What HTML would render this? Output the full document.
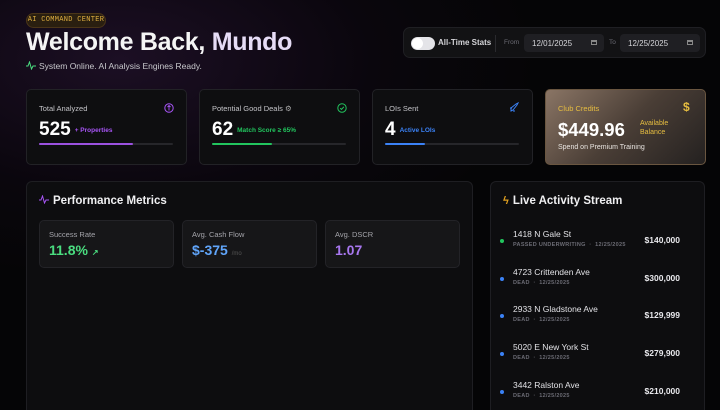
<!DOCTYPE html>
<html style="width:720px;height:410px;overflow:hidden;background:#050506"><head><meta charset="utf-8"><style>
*{box-sizing:border-box;margin:0;padding:0}
body{width:720px;height:410px;overflow:hidden;font-family:"Liberation Sans",sans-serif;color:#e5e5e5;
background:radial-gradient(ellipse 420px 220px at 120px 60px,#1c0f24 0%,#0a060d 60%,#050506 100%);position:relative}
.abs{position:absolute}
.badge{left:26px;top:13px;width:80px;height:15px;border-radius:8px;background:#2a1f10;border:1px solid #4a3518;color:#e0b040;font-family:"Liberation Mono",monospace;font-size:7px;line-height:13px;text-align:center;letter-spacing:.3px}
h1{position:absolute;left:26px;top:28px;font-size:25px;font-weight:bold;letter-spacing:-.3px;color:#f5f5f5}
h1 span{color:#e6dcf6}
.sub{left:26px;top:61px;font-size:8.5px;color:#c8c8cc}
.ctrl{left:403px;top:27px;width:303px;height:31px;border-radius:7px;background:#121214;border:1px solid #1f1f23}
.card{top:89px;width:161px;height:76px;border-radius:5px;background:#0e0e10;border:1px solid #222226}
.card .t{position:absolute;left:12px;top:14px;font-size:7.5px;color:#c4c4c8}
.card .v{position:absolute;left:12px;top:29px;font-size:19px;font-weight:bold;color:#fff}
.card .s{font-size:6.5px;font-weight:bold;margin-left:4px;vertical-align:3px}
.bar{position:absolute;left:12px;top:53px;width:134px;height:2px;background:#26262a;border-radius:1px}
.bar i{display:block;height:2px;border-radius:1px}
.panel{top:181px;height:229px;border-radius:6px 6px 0 0;background:#0d0d0f;border:1px solid #1e1e22;border-bottom:none}
.m{top:220px;width:135px;height:48px;border-radius:5px;background:#161618;border:1px solid #232327}
.m .t{position:absolute;left:9px;top:9px;font-size:7.5px;color:#a4a4aa}
.m .v{position:absolute;left:9px;top:21px;font-size:14px;font-weight:bold}
.row{left:500px;width:180px;height:30px}
.row .d{position:absolute;left:0;top:10px;width:4px;height:4px;border-radius:2px;background:#3b82f6}
.row .n{position:absolute;left:13px;top:0;font-size:8.5px;color:#e2e2e6}
.row .k{position:absolute;left:13px;top:13px;font-size:5.5px;color:#6b6b74;letter-spacing:.3px;font-weight:bold}
.row .p{position:absolute;right:0;top:6px;font-size:8.5px;font-weight:bold;color:#e8e8ec}
</style></head><body>
<div class="abs badge">AI COMMAND CENTER</div>
<h1>Welcome Back, <span>Mundo</span></h1>
<div class="abs sub"><svg width="10" height="9" viewBox="0 0 10 9" style="vertical-align:-1px;margin-right:3px"><path d="M0 5h2l1.5-4 2 7 1.5-3H10" fill="none" stroke="#4ade80" stroke-width="1"/></svg>System Online. AI Analysis Engines Ready.</div>

<div class="abs ctrl">
 <div class="abs" style="left:7px;top:9px;width:24px;height:13px;border-radius:7px;background:#e4e4e8"></div>
 <div class="abs" style="left:8px;top:10px;width:11px;height:11px;border-radius:6px;background:#fff"></div>
 <div class="abs" style="left:34px;top:10px;font-size:8px;font-weight:bold;color:#d4d4d8">All-Time Stats</div>
 <div class="abs" style="left:91px;top:7px;width:1px;height:17px;background:#2a2a2e"></div>
 <div class="abs" style="left:100px;top:11px;font-size:6.5px;color:#6b6b74">From</div>
 <div class="abs" style="left:120px;top:6px;width:80px;height:18px;border-radius:4px;background:#1f1f23;font-size:8px;color:#d4d4d8;padding:5px 0 0 8px">12/01/2025<span style="position:absolute;right:7px;top:6px;width:6px;height:5px;border:1px solid #888;border-top-width:2px"></span></div>
 <div class="abs" style="left:205px;top:11px;font-size:6.5px;color:#6b6b74">To</div>
 <div class="abs" style="left:216px;top:6px;width:80px;height:18px;border-radius:4px;background:#1f1f23;font-size:8px;color:#d4d4d8;padding:5px 0 0 8px">12/25/2025<span style="position:absolute;right:7px;top:6px;width:6px;height:5px;border:1px solid #888;border-top-width:2px"></span></div>
</div>

<div class="abs card" style="left:26px"><div class="t">Total Analyzed</div>
 <svg class="abs" style="left:137px;top:13px" width="10" height="10" viewBox="0 0 10 10"><circle cx="5" cy="5" r="4.2" fill="none" stroke="#a855f7" stroke-width="1"/><path d="M5 2.5v5M3.5 4L5 2.5 6.5 4" fill="none" stroke="#a855f7" stroke-width=".9"/></svg>
 <div class="v">525<span class="s" style="color:#a855f7">+ Properties</span></div><div class="bar"><i style="width:70%;background:#9b51e0"></i></div></div>
<div class="abs card" style="left:199px"><div class="t">Potential Good Deals <span style="color:#aaa">⚙</span></div>
 <svg class="abs" style="left:137px;top:13px" width="10" height="10" viewBox="0 0 10 10"><circle cx="5" cy="5" r="4.2" fill="none" stroke="#22c55e" stroke-width="1"/><path d="M3.2 5.2l1.3 1.2 2.4-2.6" fill="none" stroke="#22c55e" stroke-width="1"/></svg>
 <div class="v">62<span class="s" style="color:#22c55e">Match Score ≥ 65%</span></div><div class="bar"><i style="width:45%;background:#22c55e"></i></div></div>
<div class="abs card" style="left:372px"><div class="t">LOIs Sent</div>
 <svg class="abs" style="left:136px;top:12px" width="11" height="11" viewBox="0 0 11 11"><path d="M2 9l2-1 4-5 1-2-2 1-5 4zM3 6L1 6M5 8v2" fill="none" stroke="#3b82f6" stroke-width="1"/></svg>
 <div class="v">4<span class="s" style="color:#3b82f6">Active LOIs</span></div><div class="bar"><i style="width:30%;background:#3b82f6"></i></div></div>
<div class="abs card" style="left:545px;background:linear-gradient(135deg,#8a7565 0%,#4a3e36 50%,#242120 100%);border-color:#6a5640">
 <div class="t" style="color:#e6bd40">Club Credits</div>
 <div class="abs" style="left:137px;top:10px;font-size:12px;color:#e6bd40;font-weight:bold">$</div>
 <div class="v" style="font-size:18.5px">$449.96</div>
 <div class="abs" style="left:94px;top:29px;font-size:7px;color:#e6bd40;line-height:9px">Available<br>Balance</div>
 <div class="abs" style="left:12px;top:54px;font-size:7px;color:#e8e4e0">Spend on Premium Training</div></div>

<div class="abs panel" style="left:26px;width:447px"></div>
<div class="abs" style="left:39px;top:195px;font-size:11.5px;font-weight:bold;color:#f0f0f2"><svg width="10" height="9" viewBox="0 0 10 9" style="margin-right:4px"><path d="M0 5h2l1.5-4 2 7 1.5-3H10" fill="none" stroke="#a855f7" stroke-width="1"/></svg>Performance Metrics</div>
<div class="abs m" style="left:39px"><div class="t">Success Rate</div><div class="v" style="color:#4ade80">11.8% <span style="font-size:8px">↗</span></div></div>
<div class="abs m" style="left:182px"><div class="t">Avg. Cash Flow</div><div class="v" style="color:#60a5fa">$-375 <span style="font-size:6px;color:#555;font-weight:normal">/mo</span></div></div>
<div class="abs m" style="left:325px"><div class="t">Avg. DSCR</div><div class="v" style="color:#a877f0">1.07</div></div>

<div class="abs panel" style="left:490px;width:215px"></div>
<div class="abs" style="left:503px;top:195px;font-size:11.5px;font-weight:bold;color:#f0f0f2"><span style="color:#e0a020;font-size:11px;margin-right:4px">ϟ</span>Live Activity Stream</div>
<div class="abs row" style="top:229px"><i class="d" style="background:#22c55e"></i><div class="n">1418 N Gale St</div><div class="k">PASSED UNDERWRITING &nbsp;·&nbsp; 12/25/2025</div><div class="p">$140,000</div></div>
<div class="abs row" style="top:267px"><i class="d"></i><div class="n">4723 Crittenden Ave</div><div class="k">DEAD &nbsp;·&nbsp; 12/25/2025</div><div class="p">$300,000</div></div>
<div class="abs row" style="top:304px"><i class="d"></i><div class="n">2933 N Gladstone Ave</div><div class="k">DEAD &nbsp;·&nbsp; 12/25/2025</div><div class="p">$129,999</div></div>
<div class="abs row" style="top:342px"><i class="d"></i><div class="n">5020 E New York St</div><div class="k">DEAD &nbsp;·&nbsp; 12/25/2025</div><div class="p">$279,900</div></div>
<div class="abs row" style="top:380px"><i class="d"></i><div class="n">3442 Ralston Ave</div><div class="k">DEAD &nbsp;·&nbsp; 12/25/2025</div><div class="p">$210,000</div></div>
</body></html>
